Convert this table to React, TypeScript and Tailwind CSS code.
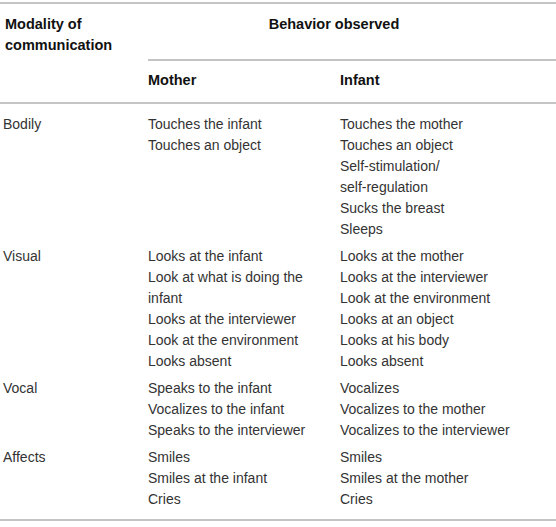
const rows: { modality: string; mother: string[]; infant: string[] }[] = [
  {
    modality: "Bodily",
    mother: ["Touches the infant", "Touches an object"],
    infant: [
      "Touches the mother",
      "Touches an object",
      "Self-stimulation/",
      "self-regulation",
      "Sucks the breast",
      "Sleeps",
    ],
  },
  {
    modality: "Visual",
    mother: [
      "Looks at the infant",
      "Look at what is doing the infant",
      "Looks at the interviewer",
      "Look at the environment",
      "Looks absent",
    ],
    infant: [
      "Looks at the mother",
      "Looks at the interviewer",
      "Look at the environment",
      "Looks at an object",
      "Looks at his body",
      "Looks absent",
    ],
  },
  {
    modality: "Vocal",
    mother: [
      "Speaks to the infant",
      "Vocalizes to the infant",
      "Speaks to the interviewer",
    ],
    infant: [
      "Vocalizes",
      "Vocalizes to the mother",
      "Vocalizes to the interviewer",
    ],
  },
  {
    modality: "Affects",
    mother: ["Smiles", "Smiles at the infant", "Cries"],
    infant: ["Smiles", "Smiles at the mother", "Cries"],
  },
];

function Lines({ items }: { items: string[] }) {
  return (
    <>
      {items.map((item, i) => (
        <div key={i}>{item}</div>
      ))}
    </>
  );
}

export default function App() {
  return (
    <div className="w-[556px] h-[527px] bg-white pt-[2px] font-['Liberation_Sans',Arial,sans-serif] text-[14px] leading-[21px] text-[#333]">
      <table className="w-full border-collapse border-t-2 border-b-2 border-[#c4c4c4]">
        <thead className="text-[14.5px]">
          <tr>
            <th
              rowSpan={2}
              className="w-[148px] pl-[5px] pr-2 pt-[10px] text-left align-top font-bold text-[#111] border-b-2 border-[#c4c4c4]"
            >
              Modality of
              <br />
              communication
            </th>
            <th
              colSpan={2}
              className="pt-[10px] pb-[24px] pr-[36px] text-center align-top font-bold text-[#111] border-b-2 border-[#c4c4c4]"
            >
              Behavior observed
            </th>
          </tr>
          <tr>
            <th className="w-[192px] pt-[9px] pb-[11px] text-left font-bold text-[#111] border-b-2 border-[#c4c4c4]">
              Mother
            </th>
            <th className="pt-[9px] pb-[11px] text-left font-bold text-[#111] border-b-2 border-[#c4c4c4]">
              Infant
            </th>
          </tr>
        </thead>
        <tbody>
          {rows.map((row, i) => (
            <tr key={row.modality}>
              <td
                className={`pl-[3px] align-top ${i === 0 ? "pt-[10px]" : "pt-[3px]"} ${i === rows.length - 1 ? "pb-[9px]" : "pb-[3px]"}`}
              >
                {row.modality}
              </td>
              <td
                className={`pr-2 align-top ${i === 0 ? "pt-[10px]" : "pt-[3px]"} ${i === rows.length - 1 ? "pb-[9px]" : "pb-[3px]"}`}
              >
                <Lines items={row.mother} />
              </td>
              <td
                className={`align-top ${i === 0 ? "pt-[10px]" : "pt-[3px]"} ${i === rows.length - 1 ? "pb-[9px]" : "pb-[3px]"}`}
              >
                <Lines items={row.infant} />
              </td>
            </tr>
          ))}
        </tbody>
      </table>
    </div>
  );
}
